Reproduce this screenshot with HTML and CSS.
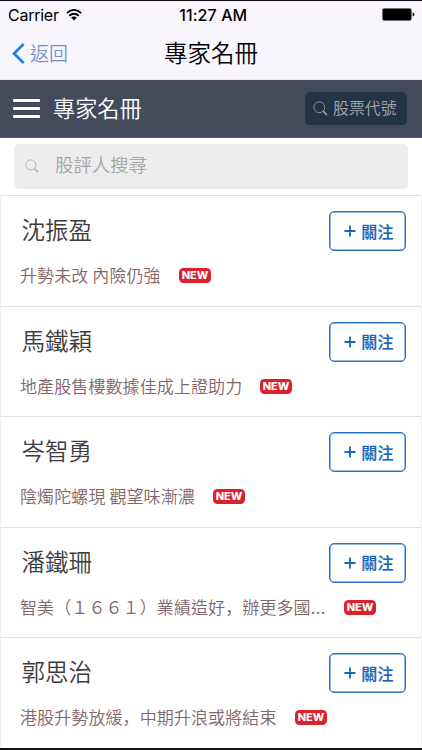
FILE: index.html
```html
<!DOCTYPE html>
<html lang="zh-Hant">
<head>
<meta charset="utf-8">
<title>專家名冊</title>
<link rel="stylesheet" href="styles.css">
</head>
<body>
<div class="screen">
  <header class="top">
    <div class="status">
      <div class="carrier"><span>Carrier</span>
        <svg class="wifi" viewBox="0 0 16 12"><g fill="none" stroke="#000" stroke-width="1.8"><path d="M.8 4.1Q8-2.3 15.2 4.1"/><path d="M3.2 6.8Q8 2.7 12.8 6.8"/></g><path d="M5.1 8.6Q8 6.2 10.9 8.6L8 11.6Z"/></svg>
      </div>
      <span class="time">11:27 AM</span>
      <svg class="battery" viewBox="0 0 33 13"><rect x=".4" y=".4" width="29" height="12.2" rx="1.8" fill="#000" stroke="#77727b" stroke-width=".6"/><path d="M30.6 4.6Q32.4 5 32.4 6.5T30.6 8.4Z"/></svg>
    </div>
    <nav class="nav">
      <a class="back"><svg viewBox="0 0 13 21"><path d="M11.7 1L2 10.5L11.7 20" fill="none" stroke="#1980ef" stroke-width="2.7"/></svg><span>返回</span></a>
      <h1>專家名冊</h1>
    </nav>
  </header>
  <div class="bar">
    <div class="menu"><i></i><i></i><i></i></div>
    <h2>專家名冊</h2>
    <div class="stock"><svg viewBox="0 0 16 16"><circle cx="6.7" cy="6.7" r="5.8"/><path d="M10.8 10.8L15 15" class="handle"/></svg><span>股票代號</span></div>
  </div>
  <div class="search"><div class="field"><svg viewBox="0 0 16 16"><circle cx="6.7" cy="6.7" r="5.8"/><path d="M10.8 10.8L15 15" class="handle"/></svg><span>股評人搜尋</span></div></div>
  <main class="list">
    <section class="row">
      <div class="head"><h3>沈振盈</h3><button class="follow"><svg viewBox="0 0 12 12"><path d="M6 .5V11.5M.5 6H11.5"/></svg><span>關注</span></button></div>
      <div class="post"><span>升勢未改 內險仍強</span><svg class="new" viewBox="0 0 32 15"><rect width="32" height="15" rx="4.5"/><text x="2.7" y="11" textLength="26.6" lengthAdjust="spacingAndGlyphs">NEW</text></svg></div>
    </section>
    <section class="row">
      <div class="head"><h3>馬鐵穎</h3><button class="follow"><svg viewBox="0 0 12 12"><path d="M6 .5V11.5M.5 6H11.5"/></svg><span>關注</span></button></div>
      <div class="post"><span>地產股售樓數據佳成上證助力</span><svg class="new" viewBox="0 0 32 15"><rect width="32" height="15" rx="4.5"/><text x="2.7" y="11" textLength="26.6" lengthAdjust="spacingAndGlyphs">NEW</text></svg></div>
    </section>
    <section class="row">
      <div class="head"><h3>岑智勇</h3><button class="follow"><svg viewBox="0 0 12 12"><path d="M6 .5V11.5M.5 6H11.5"/></svg><span>關注</span></button></div>
      <div class="post"><span>陰燭陀螺現 觀望味漸濃</span><svg class="new" viewBox="0 0 32 15"><rect width="32" height="15" rx="4.5"/><text x="2.7" y="11" textLength="26.6" lengthAdjust="spacingAndGlyphs">NEW</text></svg></div>
    </section>
    <section class="row">
      <div class="head"><h3>潘鐵珊</h3><button class="follow"><svg viewBox="0 0 12 12"><path d="M6 .5V11.5M.5 6H11.5"/></svg><span>關注</span></button></div>
      <div class="post"><span>智美（１６６１）業績造好<b class="comma" lang="zh-Hans">，</b>辦更多國<b class="dots">...</b></span><svg class="new" viewBox="0 0 32 15"><rect width="32" height="15" rx="4.5"/><text x="2.7" y="11" textLength="26.6" lengthAdjust="spacingAndGlyphs">NEW</text></svg></div>
    </section>
    <section class="row">
      <div class="head"><h3>郭思治</h3><button class="follow"><svg viewBox="0 0 12 12"><path d="M6 .5V11.5M.5 6H11.5"/></svg><span>關注</span></button></div>
      <div class="post"><span>港股升勢放緩<b class="comma" lang="zh-Hans">，</b>中期升浪或將結束</span><svg class="new" viewBox="0 0 32 15"><rect width="32" height="15" rx="4.5"/><text x="2.7" y="11" textLength="26.6" lengthAdjust="spacingAndGlyphs">NEW</text></svg></div>
    </section>
  </main>
</div>
</body>
</html>
```
FILE: styles.css
```css
* { box-sizing: border-box; }
body { margin: 0; font-family: "Noto Sans CJK TC", sans-serif; font-weight: 350; }
h1, h2, h3 { margin: 0; font-weight: 350; white-space: nowrap; }
svg { display: block; flex: none; }
.screen { width: 422px; height: 750px; overflow: hidden; display: flex; flex-direction: column; background: #fff; border-top: 1px solid #160d1a; border-bottom: 2px solid #151515; }
.top { height: 79px; flex: none; background: #f9f5fc; border-bottom: 1px solid #efebf1; }
.status { height: 27px; display: grid; grid-template-columns: 1fr auto 1fr; align-items: center; padding: 0 7.5px 0 8px; font-family: Inter, sans-serif; font-size: 16px; font-weight: 400; }
.carrier { display: flex; align-items: center; gap: 7px; }
.carrier span { letter-spacing: -.25px; }
.wifi { width: 16px; height: 12px; }
.time { font-weight: 500; font-size: 16px; letter-spacing: .1px; padding-left: 4px; }
.battery { width: 33px; height: 13px; justify-self: end; }
.nav { height: 50px; display: grid; grid-template-columns: 1fr auto 1fr; align-items: center; padding: 0 12px; }
.back { display: flex; align-items: center; gap: 5px; color: #7492c9; font-size: 19px; line-height: 28px; }
.back svg { width: 13px; height: 21px; }
.nav h1 { font-size: 23.5px; line-height: 34px; padding-bottom: 2px; }
.bar { height: 58px; flex: none; background: #424a5b; display: flex; align-items: center; padding: 0 15px 0 13px; color: #fff; border-bottom: 1px solid #596070; }
.menu { width: 27px; display: flex; flex-direction: column; gap: 5px; }
.menu i { height: 3px; background: #fff; border-radius: 1px; }
.bar h2 { font-size: 22.2px; line-height: 32px; margin: 0 auto 0 13px; padding-bottom: 3px; }
.stock { width: 102px; height: 33px; border-radius: 5px; background: #223446; display: flex; align-items: center; gap: 5px; padding-left: 8px; font-size: 15.9px; line-height: 24px; color: #a2a8ad; }
.stock span { padding-bottom: 2px; }
.stock svg { width: 15px; height: 15px; }
.stock svg, .field svg { fill: none; stroke: #8e979f; stroke-width: 1; }
.handle { stroke-width: 1.7; }
.search { height: 57px; flex: none; padding: 6px 14px 0; }
.field { height: 45px; border-radius: 5px; background: #ededed; display: flex; align-items: center; padding-left: 11px; gap: 16px; font-size: 18.4px; line-height: 28px; color: #a5a5a5; }
.field span { padding-bottom: 5px; }
.field svg { width: 14px; height: 14px; stroke: #b0b0b0; margin-bottom: 2px; }
.list { border-left: 1px solid #f1f1f1; border-right: 1px solid #f1f1f1; }
.row { height: 110.6px; border-top: 1.5px solid #e1e1e1; padding: 15px 15px 0 19px; }
.head { display: flex; justify-content: space-between; align-items: center; height: 40px; }
.head h3 { font-size: 23.5px; line-height: 36px; padding: 0 0 4px 1.5px; color: #3d3d3d; }
.follow { width: 77px; height: 40px; padding: 0 0 0 3px; border: 1px solid #2874c2; box-shadow: inset 0 0 0 .5px #2874c2; border-radius: 5px; background: #fff; color: #1967b5; font: 500 16px/24px "Noto Sans CJK TC", sans-serif; letter-spacing: .2px; display: flex; align-items: center; justify-content: center; gap: 5px; }
.follow span { padding-bottom: 1px; -webkit-text-stroke: .2px #1967b5; }
.follow svg { width: 12px; height: 12px; fill: none; stroke: #1967b5; stroke-width: 1.8; }
.post { display: flex; align-items: center; gap: 18px; margin-top: 12px; height: 25px; font-size: 17px; letter-spacing: .1px; line-height: 25px; color: #83666a; white-space: nowrap; }
.post span { padding-bottom: 2px; }
.comma { font-family: "Noto Sans CJK SC", sans-serif; font-weight: inherit; }
.dots { font-weight: inherit; letter-spacing: .4px; }
.new { width: 32px; height: 15px; fill: #dc202c; }
.new text { fill: #fff; font: 800 9.8px Inter, sans-serif; letter-spacing: 0; }
```
